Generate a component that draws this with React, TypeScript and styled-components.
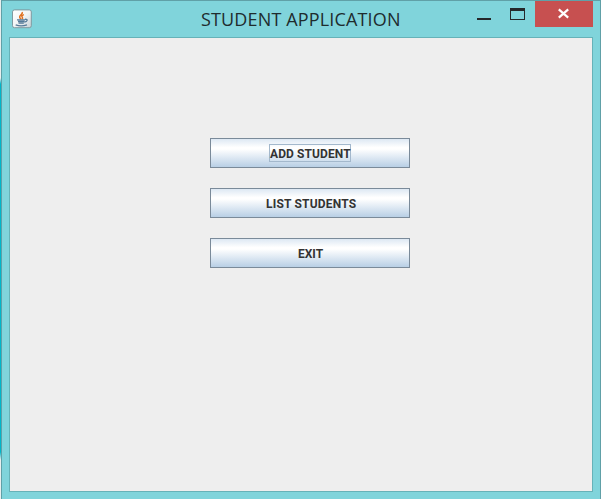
import React from "react";
import styled, { createGlobalStyle } from "styled-components";

const GlobalStyle = createGlobalStyle`
  *, *::before, *::after { box-sizing: border-box; }
  body { margin: 0; background: #f0f4f4; overflow: hidden; }
`;

const Desktop = styled.div`
  width: 601px;
  height: 499px;
  display: flex;
  background: #eceff0;
`;

const DesktopEdge = styled.div`
  width: 1px;
  flex: none;
  background: linear-gradient(#e9eeee 78px, #00b5c8 84px, #00b5c8 452px, #e9eeee 460px);
`;

const Window = styled.section`
  width: 600px;
  height: 499px;
  display: flex;
  flex-direction: column;
  background: #80d4db;
  border: 1px solid #60a0a7;
  border-bottom: 0;
`;

const TitleBar = styled.header`
  height: 36px;
  flex: none;
  display: grid;
  grid-template-columns: 188px 1fr 188px;
  padding: 0 7px 0 10px;
`;

const AppIcon = styled.svg`
  display: block;
  margin-top: 8px;
`;

const Title = styled.h1`
  margin: 0;
  padding-left: 1px;
  font: 400 18px/36px "Open Sans", "Noto Sans", sans-serif;
  letter-spacing: 0.15px;
  color: #202c2e;
  white-space: nowrap;
`;

const Controls = styled.div`
  display: flex;
  justify-content: flex-end;
`;

const ControlButton = styled.button<{ $close?: boolean }>`
  width: ${(p) => (p.$close ? 58 : 35)}px;
  height: 26px;
  padding: 0;
  border: 0;
  background: ${(p) => (p.$close ? "#c75050" : "transparent")};

  svg { display: block; }
`;

const Content = styled.main`
  flex: none;
  width: 584px;
  height: 455px;
  margin-left: 7px;
  padding-top: 100px;
  display: flex;
  flex-direction: column;
  align-items: center;
  gap: 20px;
  background: #eeeeee;
  border: 1px solid #66b2b8;
  padding-left: 18px;
`;

const MenuButton = styled.button`
  width: 200px;
  height: 30px;
  flex: none;
  padding: 0;
  display: flex;
  align-items: center;
  justify-content: center;
  border: 1px solid #7a8a99;
  background: linear-gradient(#dde8f3 0%, #ffffff 30%, #ffffff 36%, #b8cfe5 100%);
`;

const Label = styled.span<{ $width: number; $spacing: number; $focused?: boolean }>`
  width: ${(p) => p.$width}px;
  height: 18px;
  border: 1px solid ${(p) => (p.$focused ? "#a3b8cc" : "transparent")};
  font: 700 12px/18px Roboto, "Liberation Sans", sans-serif;
  letter-spacing: ${(p) => p.$spacing}px;
  color: #333333;
  text-align: left;
  white-space: nowrap;
`;

const actions = [
  { text: "ADD STUDENT", width: 82, spacing: 0.1, focused: true },
  { text: "LIST STUDENTS", width: 90, spacing: 0.2, focused: false },
  { text: "EXIT", width: 26, spacing: 0, focused: false },
];

const JavaIcon = () => (
  <AppIcon width="21" height="21" viewBox="0 0 21 21" aria-label="Java">
    <defs>
      <linearGradient id="tile" x1="0" y1="0" x2="1" y2="1">
        <stop offset="0" stopColor="#ffffff" />
        <stop offset=".5" stopColor="#f1f4f5" />
        <stop offset="1" stopColor="#c9d1d6" />
      </linearGradient>
    </defs>
    <rect x=".5" y=".9" width="18.8" height="17.8" rx="2" fill="url(#tile)" stroke="#7f999f" />
    <path d="M10.2 3C11.4 5.5 6.8 6.1 7.7 8.4c.3.8 1 1.2 1.2 2M11.9 5.6c-2.2.7-2.5 1.7-1.6 2.6.5.6.4 1.2-.2 1.8" fill="none" stroke="#e07020" strokeWidth="1.5" />
    <path d="M5 10.9h8M6 12.5h6.4M6.5 14.1h5.3M3.7 15.8c3 1.2 8.4 1 11.3 0M13 10.3c3.5-.4 2.4 2.5-.6 2.8" fill="none" stroke="#557a98" strokeWidth="1.3" />
  </AppIcon>
);

export default function App() {
  return (
    <>
      <GlobalStyle />
      <Desktop>
        <DesktopEdge />
        <Window>
          <TitleBar>
            <JavaIcon />
            <Title>STUDENT APPLICATION</Title>
            <Controls>
              <ControlButton aria-label="Minimize">
                <svg width="35" height="26" shapeRendering="crispEdges">
                  <path d="M12 17h14v2H12z" fill="#25282a" />
                </svg>
              </ControlButton>
              <ControlButton aria-label="Maximize">
                <svg width="35" height="26" shapeRendering="crispEdges">
                  <path d="M10 7h15v12H10zM11 10v8h13v-8z" fill="#25282a" fillRule="evenodd" />
                </svg>
              </ControlButton>
              <ControlButton $close aria-label="Close">
                <svg width="58" height="26">
                  <path d="M23.8 8.4l9.4 8.2M33.2 8.4l-9.4 8.2" fill="none" stroke="#fff" strokeWidth="2.2" />
                </svg>
              </ControlButton>
            </Controls>
          </TitleBar>
          <Content>
            {actions.map((a) => (
              <MenuButton key={a.text}>
                <Label $width={a.width} $spacing={a.spacing} $focused={a.focused}>{a.text}</Label>
              </MenuButton>
            ))}
          </Content>
        </Window>
      </Desktop>
    </>
  );
}
